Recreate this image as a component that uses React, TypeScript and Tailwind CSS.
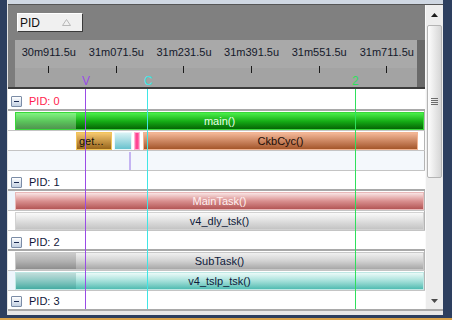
import React from 'react';

const labels = ['30m911.5u', '31m071.5u', '31m231.5u', '31m391.5u', '31m551.5u', '31m711.5u'];

const PidHeader = ({ label, red, h, pb, border = true }: { label: string; red?: boolean; h: string; pb: string; border?: boolean }) => (
    <div className={`${h} ${pb} ${border ? 'border-b-2 border-[#a9a9a9]' : ''} bg-white flex items-end pl-[3px]`}>
        <div className="flex items-center">
            <div className="w-[11px] h-[11px] border border-[#7b8ca6] rounded-[1px] bg-linear-to-b from-white to-[#c3d0e2] flex items-center justify-center">
                <div className="w-[5px] h-px bg-[#1b2a52]" />
            </div>
            <span className={`ml-[7px] text-[11px] leading-[12px] ${red ? 'text-[#ff1d4e]' : 'text-[#10163a]'}`}>{label}</span>
        </div>
    </div>
);

const Row = ({ gutter = 'bg-white', bg = 'bg-white', children }: { gutter?: string; bg?: string; children: React.ReactNode }) => (
    <div className={`h-[20px] flex border-b border-[#c4c4c4] ${bg}`}>
        <div className={`w-[7px] ${gutter}`} />
        <div className="w-[409px] flex items-start pt-px">{children}</div>
        <div className="w-px bg-[#b4b4b4]" />
    </div>
);

const Bar = ({ cls, text, textCls, overlay }: { cls: string; text: string; textCls: string; overlay?: string }) => (
    <div className={`relative w-full h-[18px] border ${cls} flex items-center justify-center`}>
        {overlay && <div className={`absolute left-0 top-0 bottom-0 w-[60px] ${overlay}`} />}
        <span className={`relative text-[11px] leading-none ${textCls}`}>{text}</span>
    </div>
);

export default function App() {
    return (
        <div className="w-[452px] h-[320px] bg-[#2d3f5f] flex flex-col overflow-hidden font-['Liberation_Sans',Arial,sans-serif]">
            <div className="flex h-[315px]">
                <div className="w-[7px]" />
                <div className="w-[436px] flex flex-col border-l border-[#e4e4e4] bg-[#efefef]">
                    <div className="h-[4px] bg-[#cfd7e2]" />
                    <div className="h-px bg-[#555555]" />
                    <div className="h-[304px] flex">
                        {/* Main panel */}
                        <div className="w-[417px] flex flex-col">
                            <div className="h-[35px] bg-[#808080] pl-[9px] pt-[8px]">
                                <div className="w-[66px] h-[19px] bg-[#f0f0f0] border-t border-l border-white border-r border-b border-r-[#3a3a3a] border-b-[#3a3a3a] flex items-center pl-[2px]">
                                    <span className="text-[12px] leading-none text-[#101010]">PID</span>
                                    <svg className="ml-[22px]" width="9" height="7" viewBox="0 0 9 7">
                                        <path d="M4.5 0.5 L8.5 6.5 L0.5 6.5 Z" fill="none" stroke="#b8b8b8" strokeWidth="1" />
                                    </svg>
                                </div>
                            </div>
                            {/* Ruler */}
                            <div className="h-[49px] flex bg-[#7c7c7c] border-b-2 border-[#3c3c3c]">
                                <div className="w-[7px]" />
                                <div className="relative w-[402px] overflow-hidden bg-[linear-gradient(#a9a9a9_0_28px,#a3a3a3_28px)]">
                                    <div className="flex pt-[6px]">
                                        {labels.map(l => (
                                            <div key={l} className="w-[67.6px] shrink-0 flex flex-col items-center">
                                                <span className="text-[11px] leading-[13px] text-[#14182a] whitespace-nowrap">{l}</span>
                                                <div className="mt-[7px] w-px h-[7px] bg-[#1a1a1a]" />
                                            </div>
                                        ))}
                                    </div>
                                    <span className="absolute left-[67px] top-[35px] text-[12px] leading-none text-[#9a4ce6]">V</span>
                                    <span className="absolute left-[129px] top-[35px] text-[12px] leading-none text-[#3fe6e6]">C</span>
                                    <span className="absolute left-[337px] top-[35px] text-[12px] leading-none text-[#2fe05c]">2</span>
                                </div>
                                <div className="w-[8px] bg-[#6a6a6a]" />
                            </div>
                            {/* Rows */}
                            <div className="relative flex flex-col">
                                <PidHeader label="PID: 0" red h="h-[22px]" pb="pb-[2px]" />
                                <Row>
                                    <Bar cls="border-[#3ad83a] bg-linear-to-b from-[#4af04a] via-[#16b016] to-[#066606]" text="main()" textCls="text-[#eaffea]" overlay="bg-white/30" />
                                </Row>
                                <Row>
                                    <div className="flex h-[18px] w-full">
                                        <div className="ml-[61px] w-[36px] border border-[#f2c458] bg-linear-to-b from-[#f6c86e] to-[#98661a] flex items-center pl-[2px]">
                                            <span className="text-[11px] leading-none text-[#141008]">get...</span>
                                        </div>
                                        <div className="ml-[2px] w-[18px] border border-[#eaf8fa] bg-linear-to-b from-[#d8f2f4] to-[#66c2ce]" />
                                        <div className="ml-[2px] w-[6px] border border-[#ffb4d4] bg-linear-to-r from-[#ff7ab4] via-[#ff2a88] to-[#ff7ab4]" />
                                        <div className="ml-[3px] w-[275px] border border-[#f2b492] bg-linear-to-b from-[#f4b898] to-[#a4562a] flex items-center justify-center">
                                            <span className="text-[11px] leading-none text-[#1c0e08]">CkbCyc()</span>
                                        </div>
                                    </div>
                                </Row>
                                <Row gutter="bg-[#f4f8fc]" bg="bg-[#f4f8fc]">
                                    <div className="ml-[114px] w-[2px] h-[18px] bg-[#c4b4f2]" />
                                </Row>
                                <PidHeader label="PID: 1" h="h-[20px]" pb="pb-[1px]" />
                                <Row gutter="bg-[#eef5fc]">
                                    <Bar cls="border-[#e8b8b8] bg-linear-to-b from-[#f8e4e4] via-[#d99090] to-[#b35656]" text="MainTask()" textCls="text-[#fff2f2]" />
                                </Row>
                                <Row>
                                    <Bar cls="border-[#d2d2d2] bg-linear-to-b from-[#fafafa] to-[#c4c4c4]" text="v4_dly_tsk()" textCls="text-[#0e1a3a]" />
                                </Row>
                                <PidHeader label="PID: 2" h="h-[20px]" pb="pb-[1px]" />
                                <Row>
                                    <Bar cls="border-[#c8c8c8] bg-linear-to-b from-[#f0f0f0] via-[#d2d2d2] to-[#a8a8a8]" text="SubTask()" textCls="text-[#0e1a3a]" overlay="bg-black/15" />
                                </Row>
                                <Row gutter="bg-[#eef5fc]">
                                    <Bar cls="border-[#bfe8e4] bg-linear-to-b from-[#eafaf8] via-[#a4e0da] to-[#4fbcb2]" text="v4_tslp_tsk()" textCls="text-[#0e1a3a]" overlay="bg-[#1a6a64]/20" />
                                </Row>
                                <PidHeader label="PID: 3" h="h-[18px]" pb="pb-[2px]" border={false} />
                                {/* cursors */}
                                <div className="absolute top-0 bottom-0 left-[77px] w-px bg-[#9a4ce6]" />
                                <div className="absolute top-0 bottom-0 left-[139px] w-px bg-[#3fe6e6]" />
                                <div className="absolute top-0 bottom-0 left-[347px] w-px bg-[#2fe05c]" />
                            </div>
                        </div>
                        {/* Scrollbar */}
                        <div className="w-[18px] bg-[#ededed] border-l border-[#fafafa] flex flex-col items-center">
                            <div className="h-[19px] flex items-center justify-center">
                                <svg width="7" height="4" viewBox="0 0 7 4"><path d="M3.5 0 L7 4 L0 4 Z" fill="#1a1a1a" /></svg>
                            </div>
                            <div className="mt-px w-[15px] h-[153px] rounded-[2px] border border-[#b4b4b4] bg-linear-to-r from-[#fdfdfd] to-[#d6d6d6] flex flex-col items-center justify-center gap-[1px]">
                                {[0, 1, 2, 3].map(i => (
                                    <div key={i} className="w-[7px] h-px bg-[#6c6c6c]" />
                                ))}
                            </div>
                            <div className="flex-1" />
                            <div className="h-[16px] flex items-center justify-center">
                                <svg width="7" height="4" viewBox="0 0 7 4"><path d="M0 0 L7 0 L3.5 4 Z" fill="#4a4a4a" /></svg>
                            </div>
                        </div>
                    </div>
                    <div className="h-[2px] bg-[#a9a9a9]" />
                    <div className="h-[4px] bg-[#e8e8e8]" />
                </div>
            </div>
            <div className="h-[3px]" />
            <div className="h-[2px] bg-[#d9a24a]" />
        </div>
    );
}
